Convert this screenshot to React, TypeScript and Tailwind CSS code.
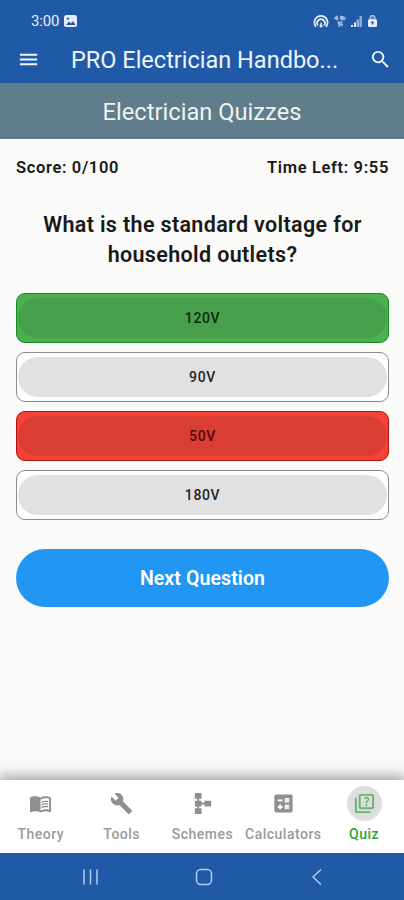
import React from 'react';
import {
  MdBuild,
  MdMenu,
  MdMenuBook,
  MdOutlineQuiz,
  MdSchema,
  MdSearch,
} from 'react-icons/md';

type AnswerState = 'correct' | 'wrong' | 'idle';

const answers: { label: string; state: AnswerState }[] = [
  { label: '120V', state: 'correct' },
  { label: '90V', state: 'idle' },
  { label: '50V', state: 'wrong' },
  { label: '180V', state: 'idle' },
];

const answerStyles = {
  correct: { box: 'bg-[#4caf50] border-[#188a22]', inner: 'bg-[#489f4b]', text: 'text-[#0d2a10]' },
  wrong: { box: 'bg-[#f44336] border-[#b0120c]', inner: 'bg-[#d93d33]', text: 'text-[#4a0c08]' },
  idle: { box: 'bg-white border-[#8c8c8c]', inner: 'bg-[#e1e1e1]', text: 'text-[#252525]' },
};

function CalculatorIcon({ size }: { size: number }) {
  return (
    <svg viewBox="0 0 24 24" width={size} height={size}>
      <rect x="2.5" y="2.5" width="19" height="19" rx="2" fill="currentColor" />
      <g fill="#fff">
        <path d="M6 7.8h5v2H6z" />
        <rect x="13.2" y="6.2" width="4.8" height="4.8" opacity=".85" />
        <path d="M7.5 13h2v1.6H11v2H9.5V18h-2v-1.4H6v-2h1.5z" />
        <rect x="13.2" y="13.2" width="4.8" height="4.8" opacity=".85" />
      </g>
    </svg>
  );
}

const tabs = [
  { label: 'Theory', icon: MdMenuBook },
  { label: 'Tools', icon: MdBuild },
  { label: 'Schemes', icon: MdSchema },
  { label: 'Calculators', icon: CalculatorIcon },
  { label: 'Quiz', icon: MdOutlineQuiz, active: true },
];

function StatusBar() {
  return (
    <div className="flex h-[35px] items-center justify-between pt-[7px] pr-[27px] pl-[31px] text-[#e6edfa]">
      <div className="flex items-center gap-[5px]">
        <span className="text-[15px] leading-none tracking-[-0.2px]">3:00</span>
        <svg viewBox="0 0 13 12" className="h-3 w-[13px]">
          <rect width="13" height="12" rx="2.5" fill="currentColor" />
          <path d="M2 10l3-3.5 2 2L9 6l2.5 4z" fill="#205aa7" />
          <circle cx="4" cy="3.6" r="1.2" fill="#205aa7" />
        </svg>
      </div>
      <div className="flex items-center gap-[5px]">
        <svg viewBox="0 0 16 13" className="h-[13px] w-4" fill="none" stroke="currentColor" strokeWidth="1.8">
          <path d="M3 11.8A6.6 6.6 0 1 1 13 11.8" />
          <path d="M5 10.4A3.8 3.8 0 1 1 11 10.4" />
          <path d="M8 7.5L6.7 12h2.6z" fill="currentColor" strokeWidth=".6" />
        </svg>
        <svg viewBox="0 0 12 12" className="h-3 w-3 opacity-65" fill="none" stroke="currentColor" strokeWidth="1.5">
          <path d="M3 .8L.8 3.6h3.4M3.2.8v4.6M6.6.8v3.8M9.8 1.8H8v2.8h3.2M7.6 2.7h4" />
          <path d="M5 7v5M3.7 8.5L5 7l1.3 1.5M7.5 6v4.5M6.2 9l1.3 1.5L8.8 9" />
        </svg>
        <svg viewBox="0 0 11 12" className="h-3 w-[11px]" fill="currentColor">
          <path d="M0 10h2v2H0zM3 7.5h2V12H3z" />
          <path d="M5.5 4.5h2.7V12H5.5zM8.5 1H11v11H8.5z" opacity=".55" />
        </svg>
        <svg viewBox="0 0 9 12" className="ml-px h-3 w-[9px]">
          <path d="M2 5V3a2.5 2.5 0 0 1 5 0v2" fill="currentColor" fillOpacity=".4" stroke="currentColor" strokeWidth="1.3" opacity=".7" />
          <rect y="4.2" width="9" height="7.8" rx="1.2" fill="currentColor" />
          <path d="M4 6h1v1.3h1.3v1H5v1.4H4V8.3H2.7v-1H4z" fill="#205aa7" />
        </svg>
      </div>
    </div>
  );
}

function AnswerButton({ label, state }: { label: string; state: AnswerState }) {
  const style = answerStyles[state];
  return (
    <button className={`flex h-[50px] w-full items-center rounded-[9px] border px-px ${style.box}`}>
      <span className={`flex h-10 flex-1 items-center justify-center rounded-[20px] text-sm font-medium tracking-[0.6px] ${style.inner} ${style.text}`}>
        {label}
      </span>
    </button>
  );
}

function BottomTabs() {
  return (
    <nav className="flex h-[73px] bg-white shadow-[0_-2px_12px_2px_rgba(0,0,0,0.35)]">
      {tabs.map(({ label, icon: Icon, active }) => (
        <div key={label} className="flex flex-1 flex-col items-center pt-[6px] pl-px">
          <div className={`flex h-[35px] w-[35px] items-center justify-center rounded-full ${active ? 'bg-[#dedede] text-[#66b56b]' : 'text-[#8f8f8f]'}`}>
            <Icon size={23} />
          </div>
          <span className={`mt-[3px] text-sm leading-5 font-medium tracking-[0.5px] ${active ? 'text-[#2ea336]' : 'text-[#9a9a9a]'}`}>
            {label}
          </span>
        </div>
      ))}
    </nav>
  );
}

function SystemNav() {
  return (
    <div className="flex h-[47px] items-center bg-[#205aa7] pr-[78px] pl-[82px] text-[#b4cbed]">
      <svg viewBox="0 0 18 18" className="h-[18px] w-[18px]" fill="none" stroke="currentColor" strokeWidth="1.5">
        <path d="M2 1.5v15M8.5 1.5v15M15 1.5v15" />
      </svg>
      <svg viewBox="0 0 18 18" className="mx-auto h-[18px] w-[18px]" fill="none" stroke="currentColor" strokeWidth="1.5">
        <rect x="1.5" y="1.5" width="15" height="15" rx="4.5" />
      </svg>
      <svg viewBox="0 0 18 18" className="h-[18px] w-[18px]" fill="none" stroke="currentColor" strokeWidth="1.5">
        <path d="M13 1.5L5 9l8 7.5" />
      </svg>
    </div>
  );
}

export default function App() {
  return (
    <div className="flex h-[900px] w-[404px] flex-col overflow-hidden bg-[#fafaf8] font-[Roboto,sans-serif]">
      <header className="h-[83px] bg-[#205aa7]">
        <StatusBar />
        <div className="flex h-12 items-center pr-3 pl-[17px] text-[#eef4fd]">
          <MdMenu size={23} />
          <h1 className="ml-[31px] flex-1 pt-[3px] text-[23.5px] whitespace-nowrap">PRO Electrician Handbo...</h1>
          <MdSearch size={23} />
        </div>
      </header>

      <h2 className="flex h-14 items-center justify-center bg-[#607d8b] pt-[3px] text-[23.7px] text-[#edf2f5]">
        Electrician Quizzes
      </h2>

      <main className="flex-1 pr-[15px] pl-4 text-[#191919]">
        <div className="mt-[17px] flex justify-between text-[16.5px] leading-6 font-semibold tracking-[0.65px]">
          <span>Score: 0/100</span>
          <span>Time Left: 9:55</span>
        </div>

        <p className="mt-[30px] text-center text-[21.5px] leading-[30px] font-semibold tracking-[0.35px]">
          What is the standard voltage for
          <br />
          household outlets?
        </p>

        <div className="mt-[23px] flex flex-col gap-[9px]">
          {answers.map((answer) => (
            <AnswerButton key={answer.label} {...answer} />
          ))}
        </div>

        <button className="mt-[29px] h-[58px] w-full rounded-full bg-[#2196f3] pt-px text-[19.5px] font-semibold tracking-[0.1px] text-white">
          Next Question
        </button>
      </main>

      <BottomTabs />
      <SystemNav />
    </div>
  );
}
